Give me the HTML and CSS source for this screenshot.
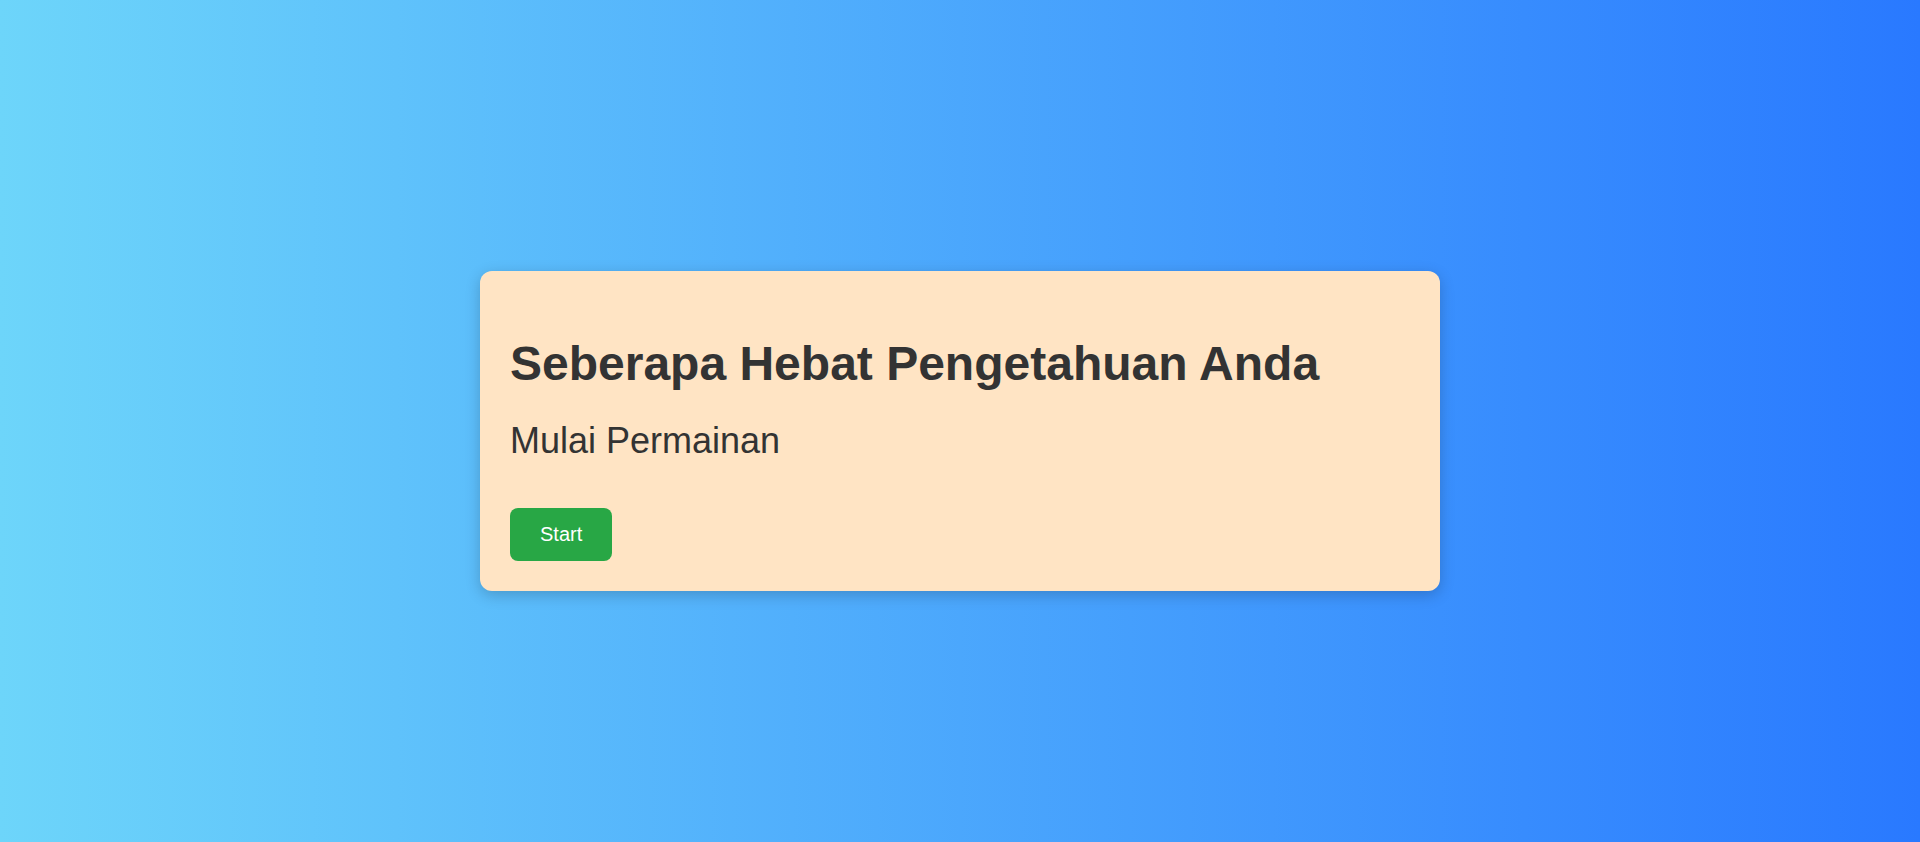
FILE: index.html
```html
<!DOCTYPE html>
<html lang="id">
<head>
<meta charset="utf-8">
<title>Kuis</title>
<link rel="stylesheet" href="styles.css">
</head>
<body>
<main class="page">
  <section class="card">
    <h1 class="title">Seberapa Hebat Pengetahuan Anda</h1>
    <p class="subtitle">Mulai Permainan</p>
    <button class="start-btn" type="button">Start</button>
  </section>
</main>
</body>
</html>
```
FILE: styles.css
```css
* { box-sizing: border-box; }
html, body { margin: 0; padding: 0; }
body {
  font-family: "Liberation Sans", Arial, sans-serif;
  background: linear-gradient(to right, #6dd5fa, #2979ff);
  min-height: 100vh;
}
.page {
  min-height: 100vh;
  padding-top: 20px;
  display: flex;
  align-items: center;
  justify-content: center;
}
.card {
  width: 960px;
  background: #ffe4c4;
  border-radius: 12px;
  padding: 30px;
  box-shadow: 0 4px 15px rgba(0, 0, 0, 0.2);
  color: #333;
}
.title {
  font-size: 48px;
  font-weight: bold;
  margin: 35px 0 29px;
}
.subtitle {
  font-size: 36px;
  margin: 0 0 46px;
}
.start-btn {
  font-family: "Liberation Sans", Arial, sans-serif;
  font-size: 20px;
  padding: 15px 30px;
  border: none;
  border-radius: 8px;
  background: #28a745;
  color: #fff;
  cursor: pointer;
  display: block;
}
```
